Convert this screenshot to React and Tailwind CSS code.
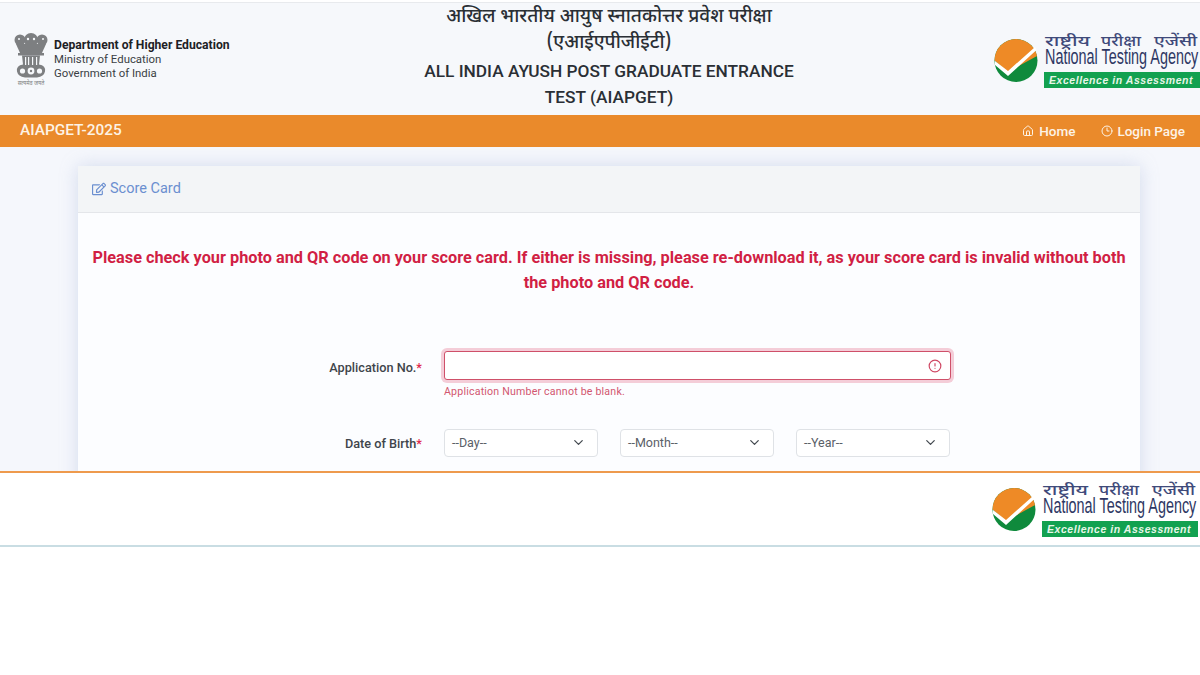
import React from 'react'
import { ChevronDown, House, Clock3, CircleAlert } from 'lucide-react'
import { FaRegEdit } from 'react-icons/fa'

const hindiFont = "'Noto Sans Devanagari','Noto Sans','DejaVu Sans',sans-serif"

const Emblem = () => (
  <svg width="36" height="56" viewBox="0 0 36 56" className="shrink-0">
    <g fill="#7d7f81">
      <circle cx="7" cy="9" r="5.5" />
      <circle cx="29" cy="9" r="5.5" />
      <circle cx="18" cy="9" r="7" />
      <path d="M3 13 L33 13 L29 22 L7 22 Z" />
      <rect x="5" y="22" width="26" height="2.5" />
      <path d="M9 24.5 h18 l-1 9 q7 1 6 7 q-1 5 -8 6 h-12 q-7 -1 -8 -6 q-1 -6 6 -7 Z" />
    </g>
    <g fill="#f6f8fb">
      <circle cx="15" cy="8" r="1.2" />
      <circle cx="21" cy="8" r="1.2" />
      <circle cx="6" cy="8" r="1" />
      <circle cx="30" cy="8" r="1" />
      <rect x="12" y="26" width="1.2" height="8" />
      <rect x="15" y="26" width="1.2" height="8" />
      <rect x="19" y="26" width="1.2" height="8" />
      <rect x="23" y="26" width="1.2" height="8" />
      <circle cx="18" cy="40" r="3.4" />
      <circle cx="9.5" cy="40" r="2.6" />
      <circle cx="26.5" cy="40" r="2.6" />
    </g>
    <circle cx="18" cy="40" r="1.2" fill="#7d7f81" />
    <text x="18" y="54" textAnchor="middle" fontSize="5.5" fill="#7d7f81" fontFamily={hindiFont}>सत्यमेव जयते</text>
  </svg>
)

const NtaLogo = ({ className }) => (
  <svg width="206" height="58" viewBox="0 0 206 58" className={className}>
    <circle cx="22" cy="28.5" r="21.5" fill="#0f8a3c" />
    <path d="M0.5 28.5 A21.5 21.5 0 0 1 43.5 28.5 L43 24 L14 40 Z" fill="#ee8a26" />
    <path d="M1 29 L14 39 L41 15 L42.5 18 L14 44 L1 33 Z" fill="#ffffff" />
    <g fill="#3f4a7a" fontSize="15" fontWeight="500" fontFamily={hindiFont}>
      <text transform="translate(51 14) scale(1.4 1)">राष्ट्रीय</text>
      <text transform="translate(107 14) scale(1.17 1)">परीक्षा</text>
      <text transform="translate(160 14) scale(1.26 1)">एजेंसी</text>
    </g>
    <text transform="translate(51 31.5) scale(0.64 1)" fill="#2e3763" fontSize="22.5" fontFamily="'Liberation Sans',sans-serif">National Testing Agency</text>
    <rect x="50" y="40" width="156" height="16" fill="#12a150" />
    <text x="55" y="52" fill="#e8f6e8" fontSize="10.5" fontWeight="700" fontStyle="italic" letterSpacing="0.55" fontFamily="'Liberation Sans',sans-serif">Excellence in Assessment</text>
  </svg>
)

const DateSelect = ({ label }) => (
  <div className="flex h-[28px] w-[154px] items-center justify-between rounded border border-[#dfe2e6] bg-white pl-[7px] pr-[11px] text-[12.5px] text-[#5a6067]">
    <span>{label}</span>
    <ChevronDown size={15} strokeWidth={2} className="text-[#444a50]" />
  </div>
)

export default function App() {
  return (
    <div className="flex h-[675px] w-[1200px] flex-col overflow-hidden bg-white font-['Roboto',sans-serif]">
      <header className="mt-[2px] flex h-[113px] items-center border-t border-[#e8eaed] bg-[#f6f8fb] pl-[13px]">
        <div className="flex w-[396px] items-center gap-[5px] pb-[1px]">
          <Emblem />
          <div className="text-[11.4px] leading-[14px] text-[#3a3f44]">
            <div className="text-[12.15px] font-bold text-[#1d2125]">Department of Higher Education</div>
            <div>Ministry of Education</div>
            <div>Government of India</div>
          </div>
        </div>
        <div className="w-[400px] pb-[3px] text-center text-[17.3px] font-medium leading-[26.3px] text-[#2a2f35]">
          <div className="font-['Noto_Sans_Devanagari','Noto_Sans','DejaVu_Sans',sans-serif] text-[19px]">अखिल भारतीय आयुष स्नातकोत्तर प्रवेश परीक्षा</div>
          <div className="font-['Noto_Sans_Devanagari','Noto_Sans','DejaVu_Sans',sans-serif] text-[19px]">(एआईएपीजीईटी)</div>
          <div>ALL INDIA AYUSH POST GRADUATE ENTRANCE</div>
          <div>TEST (AIAPGET)</div>
        </div>
        <NtaLogo className="ml-auto mt-[4px]" />
      </header>

      <nav className="flex h-[32px] shrink-0 items-center justify-between bg-[#ea8a2b] pl-[20px] pr-[15px] text-white">
        <span className="text-[15.4px] font-medium text-[#fdf3e6]">AIAPGET-2025</span>
        <div className="flex items-center gap-[26px] text-[13.5px] font-medium text-[#fdf3e6]">
          <span className="flex items-center gap-[5px]"><House size={12} />Home</span>
          <span className="flex items-center gap-[4px]"><Clock3 size={12} />Login Page</span>
        </div>
      </nav>

      <main className="h-[324px] shrink-0 overflow-hidden bg-[#f5f7fc] px-[78px] pt-[19px]">
        <div className="h-[400px] w-[1062px] rounded bg-[#fcfdff] shadow-[0_0_18px_rgba(150,165,210,0.35)]">
          <div className="flex h-[47px] items-center gap-[4px] border-b border-[#e4e6ea] bg-[#f3f5f7] pl-[14px] text-[14.5px] text-[#6b8fd0]">
            <FaRegEdit size={14} />
            Score Card
          </div>
          <p className="px-[12px] pt-[32px] text-center text-[16.3px] font-bold leading-[25px] text-[#d11f44]">
            Please check your photo and QR code on your score card. If either is missing, please re-download it, as your score card is invalid without both the photo and QR code.
          </p>
          <div className="mt-[56px] flex">
            <label className="w-[366px] pr-[22px] pt-[7px] text-right text-[12.7px] font-medium text-[#3f454b]">
              Application No.<span className="text-[#e0284d]">*</span>
            </label>
            <div className="w-[507px]">
              <div className="flex h-[29px] items-center justify-end rounded-[3px] border border-[#cf5069] bg-white pr-[8px] shadow-[0_0_0_3px_rgba(220,53,90,0.24)]">
                <CircleAlert size={14} className="text-[#cf4763]" />
              </div>
              <div className="mt-[4px] text-[10.6px] tracking-[0.2px] text-[#d2566f]">Application Number cannot be blank.</div>
            </div>
          </div>
          <div className="mt-[29px] flex items-center">
            <label className="w-[366px] pr-[22px] pt-[2px] text-right text-[12.7px] font-medium text-[#3f454b]">
              Date of Birth<span className="text-[#e0284d]">*</span>
            </label>
            <div className="flex gap-[22px]">
              <DateSelect label="--Day--" />
              <DateSelect label="--Month--" />
              <DateSelect label="--Year--" />
            </div>
          </div>
        </div>
      </main>

      <div className="h-[2px] shrink-0 bg-[#ee9a4d]" />
      <footer className="flex h-[72px] shrink-0 items-center justify-end bg-white pr-[2px] pt-[2px]">
        <NtaLogo />
      </footer>
      <div className="h-[2px] shrink-0 bg-[#c9dde3]" />
    </div>
  )
}
